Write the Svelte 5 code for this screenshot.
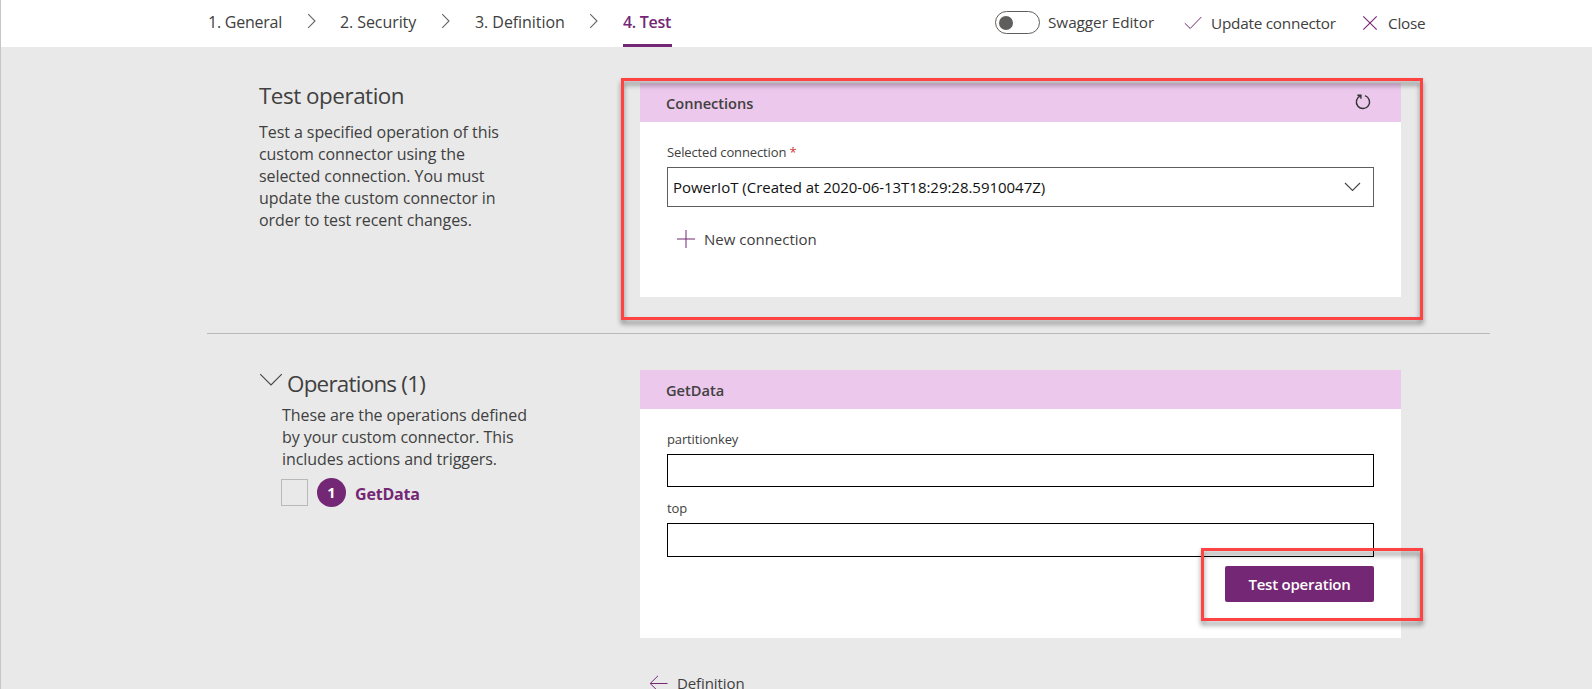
<script>
  const steps = [
    { label: '1. General', spacing: -0.24 },
    { label: '2. Security', spacing: -0.08 },
    { label: '3. Definition', spacing: -0.06 },
    { label: '4. Test', spacing: -0.3, active: true }
  ];
  let editorOn = $state(false);
  let partitionKey = $state('');
  let top = $state('');
</script>

<div class="page">
  <header>
    <nav>
      {#each steps as step}
        <div class="step" class:active={step.active}>
          <span class="name" style:letter-spacing="{step.spacing}px">{step.label}</span>
          {#if !step.active}
            <svg width="10" height="16" viewBox="0 0 10 16"><path d="M1.2 1.2 8 8 1.2 14.8" /></svg>
          {/if}
        </div>
      {/each}
    </nav>
    <div class="actions">
      <button class="toggle" aria-label="Toggle editor" aria-pressed={editorOn} onclick={() => (editorOn = !editorOn)}><i></i></button>
      <span class="swagger">Swagger Editor</span>
      <svg class="check" width="18" height="16" viewBox="0 0 18 16"><path d="M.8 8.2 6.2 13.5 17.3 2" /></svg>
      <span class="update">Update connector</span>
      <svg class="close" width="16" height="16" viewBox="0 0 16 16"><path d="M1.3 1.3 14.7 14.7M14.7 1.3 1.3 14.7" /></svg>
      <span class="close-text">Close</span>
    </div>
  </header>

  <main>
    <section class="first">
      <aside>
        <h2>Test operation</h2>
        <p>Test a specified operation of this custom connector using the selected connection. You must update the custom connector in order to test recent changes.</p>
      </aside>
      <div class="card">
        <div class="card-head">
          <span>Connections</span>
          <svg width="18" height="18" viewBox="0 0 18 18"><path d="M10.9 2.6A6.6 6.6 0 1 1 6.2 2.9M3.4 2.3H6.9V5.8" /></svg>
        </div>
        <div class="card-body">
          <div class="label">Selected connection <b>*</b></div>
          <div class="select">
            <span>PowerIoT (Created at 2020-06-13T18:29:28.5910047Z)</span>
            <svg width="17" height="10" viewBox="0 0 17 10"><path d="M1 1 8.5 8.5 16 1" /></svg>
          </div>
          <div class="new">
            <svg width="18" height="18" viewBox="0 0 18 18"><path d="M9 0V18M0 9H18" /></svg>
            <span>New connection</span>
          </div>
        </div>
      </div>
    </section>

    <section class="second">
      <aside>
        <div class="ops-title">
          <svg width="24" height="14" viewBox="0 0 24 14"><path d="M1.2 1.2 12 12 22.8 1.2" /></svg>
          <h2>Operations (1)</h2>
        </div>
        <p>These are the operations defined by your custom connector. This includes actions and triggers.</p>
        <div class="operation">
          <span class="box"></span>
          <span class="badge">1</span>
          <strong>GetData</strong>
        </div>
      </aside>
      <div class="column">
        <div class="card">
          <div class="card-head"><span>GetData</span></div>
          <div class="card-body">
            <label class="label" for="pk">partitionkey</label>
            <input id="pk" bind:value={partitionKey} />
            <label class="label next" for="top">top</label>
            <input id="top" class="tall" bind:value={top} />
            <button class="test">Test operation</button>
          </div>
        </div>
        <div class="back">
          <svg width="19" height="17" viewBox="0 0 19 17"><path d="M9 .8 1.2 8.5 9 16.2M1.2 8.5H18.5" /></svg>
          <span>Definition</span>
        </div>
      </div>
    </section>
  </main>

  <div class="callout connections"></div>
  <div class="callout run"></div>
</div>

<style>
  :global(body) { margin: 0; overflow: hidden; }
  * { box-sizing: border-box; }
  .page {
    position: relative;
    height: 689px;
    overflow: hidden;
    border-left: 1px solid #c6c6c6;
    background: #e9e9e9;
    color: #404040;
    font-family: 'Open Sans', 'Noto Sans', sans-serif;
    white-space: nowrap;
  }
  svg { display: block; flex: none; fill: none; stroke: #444; stroke-width: 1.1; overflow: visible; }
  span, strong { flex: none; }
  h2, p { margin: 0; font-weight: 400; }

  header { display: flex; height: 47px; padding-left: 207px; background: #fff; }
  nav { display: grid; grid-template-columns: 132px 135px 148px 49px; width: 787px; }
  .step { display: flex; justify-content: space-between; height: 47px; padding: 13px 24px 0 0; font-size: 16px; line-height: 18px; }
  .step:first-child { padding-right: 23px; }
  .step svg { stroke: #666; }
  .step.active { width: 49px; padding-right: 0; border-bottom: 3px solid #742774; color: #742774; font-weight: 600; }

  .actions { display: flex; align-items: center; padding-bottom: 2px; font-size: 15.3px; line-height: 20px; }
  .toggle { width: 45px; height: 23px; padding: 0 0 0 3px; border: 1px solid #605e5c; border-radius: 12px; background: #fff; }
  .toggle i { display: block; width: 14px; height: 14px; border-radius: 50%; background: #605e5c; }
  .swagger { width: 136px; margin-left: 8px; padding-bottom: 2px; letter-spacing: -0.05px; }
  .check { margin-right: 9px; stroke: #742774; stroke-width: 1; }
  .update { width: 151px; letter-spacing: -0.23px; }
  .close { margin-right: 10px; stroke: #742774; stroke-width: 1.1; }
  .close-text { letter-spacing: -0.23px; }

  main { width: 1283px; margin-left: 206px; }
  section { display: grid; grid-template-columns: 381px 761px; padding: 32px 0 0 52px; }
  .first { height: 287px; border-bottom: 1px solid #b9b9b9; }
  h2 { font-size: 22.4px; line-height: 33px; letter-spacing: -0.46px; }
  p { width: 252px; margin-top: 9px; font-size: 16px; line-height: 22px; letter-spacing: -0.07px; white-space: normal; }

  .ops-title { display: flex; padding-top: 1px; }
  .ops-title svg { margin: 6px 4px 0 0; }
  .ops-title h2 { letter-spacing: -0.75px; }
  .second p { margin: 4px 0 0 22px; padding-left: 1px; }
  .operation { display: flex; align-items: center; margin: 8px 0 0 22px; height: 29px; }
  .box { width: 27px; height: 27px; border: 1px solid #b9b9b9; }
  .badge { width: 29px; height: 29px; margin: 0 9px; border-radius: 50%; background: #742774; color: #fff; font-size: 14.5px; font-weight: 700; line-height: 29px; text-align: center; }
  .operation strong { padding-top: 3px; color: #742774; font-size: 16px; font-weight: 700; line-height: 22px; letter-spacing: -0.18px; }

  .card { margin-top: 4px; background: #fff; }
  .first .card { height: 214px; }
  .second .card { height: 268px; }
  .card-head { display: flex; justify-content: space-between; height: 39px; padding: 2px 29px 0 26px; background: #ecc8ec; font-size: 14.6px; font-weight: 600; line-height: 37px; letter-spacing: -0.01px; }
  .card-head svg { margin-top: 8px; stroke: #333; stroke-width: 1.4; }
  .card-body { display: flex; flex-direction: column; padding: 21px 27px 0; }
  .label { height: 18px; margin-bottom: 6px; font-size: 13px; line-height: 18px; letter-spacing: -0.13px; }
  .label b { color: #d13438; font-weight: 400; }
  .select { display: flex; align-items: center; justify-content: space-between; height: 40px; padding: 0 12px 0 5px; border: 1px solid #605e5c; color: #111; font-size: 15px; line-height: 20px; letter-spacing: -0.03px; }
  .new { display: flex; align-items: center; gap: 9px; height: 24px; margin: 20px 0 0 10px; font-size: 15px; }
  .new svg, .back svg { stroke: #742774; stroke-width: 1; }
  input { width: 100%; height: 33px; border: 1px solid #000; border-radius: 0; background: #fff; outline: 0; font: inherit; }
  input.tall { height: 34px; }
  .label.next { margin-top: 12px; }
  .test { align-self: flex-end; width: 149px; height: 36px; margin-top: 9px; padding: 0; border: 0; border-radius: 2px; background: #742774; color: #fff; font: 600 15px/36px 'Open Sans', sans-serif; letter-spacing: -0.23px; }
  .back { display: flex; align-items: center; gap: 9px; height: 24px; margin: 33px 0 0 9px; font-size: 15px; letter-spacing: -0.1px; }

  .callout { position: absolute; border: 3px solid #ff4343; filter: drop-shadow(0 4px 2.5px rgba(0, 0, 0, 0.45)); pointer-events: none; }
  .connections { left: 620px; top: 78px; width: 802px; height: 242px; }
  .run { left: 1200px; top: 548px; width: 222px; height: 73px; }
</style>
